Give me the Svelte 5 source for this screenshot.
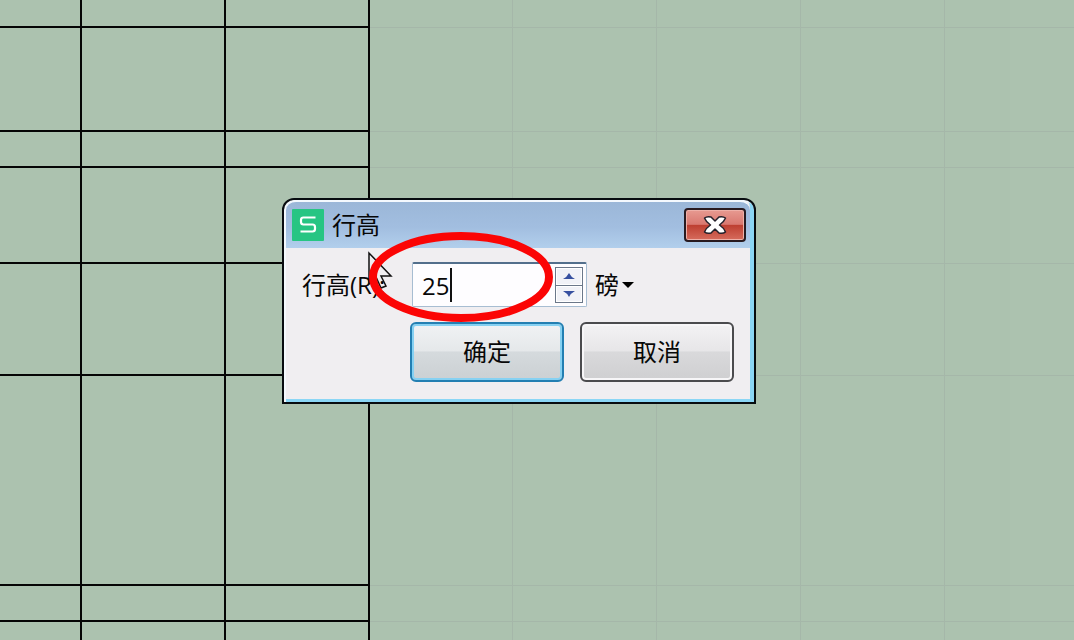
<script>
  let height = $state('25');
  const rows = [28, 104, 36, 96, 112, 210, 36, 18];
  const columns = [82, 144, 144, 143, 144, 144, 144];

  function step(amount) {
    height = String(Math.max(0, Number(height) + amount));
  }
</script>

<div class="desktop">
  <table class="sheet" aria-label="工作表">
    <colgroup>
      {#each columns as width}
        <col style="width: {width}px" />
      {/each}
      <col />
    </colgroup>
    <tbody>
      {#each rows as rowHeight}
        <tr style="height: {rowHeight}px">
          {#each columns as _, i}
            <td class:filled={i < 3}></td>
          {/each}
          <td></td>
        </tr>
      {/each}
    </tbody>
  </table>

  <div class="dialog" role="dialog" aria-labelledby="dialog-title">
    <header>
      <svg class="logo" viewBox="0 0 32 32" aria-hidden="true">
        <rect width="32" height="32" rx="1" fill="#27c583" />
        <path d="M23.500 8.500H11.500Q9 8.500 9 11V13Q9 15.500 11.500 15.500H20.500Q23 15.500 23 18V20Q23 22.500 20.500 22.500H8.500" fill="none" stroke="#fff" stroke-width="2.200" />
      </svg>
      <h1 id="dialog-title">行高</h1>
      <button class="close" type="button" aria-label="关闭">
        <svg viewBox="0 0 24 20" aria-hidden="true">
          <path d="M1.500 3Q4 1 8 2L12 6L16 2Q20 1 22.500 3Q21 7 16.500 10Q21 13 22.500 17Q20 19 16 18L12 14L8 18Q4 19 1.500 17Q3 13 7.500 10Q3 7 1.500 3Z" fill="#fff" stroke="#25202a" stroke-width="1.500" stroke-linejoin="round" />
        </svg>
      </button>
    </header>

    <form onsubmit={(event) => event.preventDefault()}>
      <label for="row-height">行高(R):</label>
      <div class="entry">
        <div class="field">
          <input id="row-height" type="text" inputmode="numeric" autocomplete="off" bind:value={height} />
          <span class="caret"></span>
          <div class="spinner">
            <button type="button" aria-label="增大" onclick={() => step(1)}>
              <svg viewBox="0 0 12 6" aria-hidden="true"><path d="M0 6Q4 4 6 0Q8 4 12 6Z" fill="#3650a0" /></svg>
            </button>
            <button type="button" aria-label="减小" onclick={() => step(-1)}>
              <svg viewBox="0 0 12 6" aria-hidden="true"><path d="M0 0Q4 2 6 6Q8 2 12 0Z" fill="#3650a0" /></svg>
            </button>
          </div>
        </div>
        <button class="unit" type="button">
          磅
          <svg viewBox="0 0 12 6" aria-hidden="true"><path d="M0 0H12L6 6Z" /></svg>
        </button>
      </div>
      <div class="actions">
        <button class="action primary" type="submit">确定</button>
        <button class="action" type="button">取消</button>
      </div>
    </form>

    <svg class="pointer" viewBox="0 0 28 42" aria-hidden="true">
      <path d="M2 2V33L9 26L14 37L19 35L14 25H24Z" fill="none" stroke="#111" stroke-width="1.500" />
    </svg>
    <svg class="ring" viewBox="0 0 186 90" aria-hidden="true">
      <ellipse cx="93" cy="45" rx="88" ry="41" fill="none" stroke="#fb0505" stroke-width="8" />
    </svg>
  </div>
</div>

<style>
  :global(body) {
    margin: 0;
    background: #acc2af;
  }

  .desktop {
    position: relative;
    min-height: 100vh;
    overflow: hidden;
    font-family: "Open Sans", "Noto Sans CJK SC", sans-serif;
    font-size: 24px;
    line-height: 32px;
    color: #080808;
  }

  .desktop * {
    box-sizing: border-box;
  }

  button,
  input {
    margin: 0;
    padding: 0;
    border: 0;
    background: none;
    font: inherit;
    color: inherit;
  }

  svg {
    display: block;
  }

  .sheet {
    width: 100%;
    table-layout: fixed;
    border-collapse: separate;
    border-spacing: 0;
  }

  td {
    padding: 0;
    border-right: 1px solid #a5b7a9;
    border-bottom: 1px solid #a5b7a9;
  }

  td:last-child {
    border-right: 0;
  }

  tr:last-child td {
    border-bottom: 0;
  }

  td.filled {
    border-color: #050505;
    border-right-width: 2px;
    border-bottom-width: 2px;
  }

  .dialog {
    position: absolute;
    top: 198px;
    left: 282px;
    width: 474px;
    border: 2px solid #080c10;
    border-radius: 12px 12px 0 0;
    background: #f0eef1;
    box-shadow: inset 2px 2px #f4f9fe, inset -4px -3px #8bd6f5;
  }

  header {
    display: flex;
    align-items: center;
    gap: 8px;
    height: 48px;
    margin: 0 4px 0 2px;
    padding: 0 4px 0 6px;
    border-top: 2px solid #f4f9fe;
    border-radius: 10px 10px 0 0;
    background: linear-gradient(#9bb7d8, #a2bee0 55%, #b2cfec);
  }

  .logo {
    width: 32px;
    height: 32px;
  }

  h1 {
    flex: 1;
    margin: 0;
    font-size: 24px;
    font-weight: 400;
  }

  .close {
    display: grid;
    place-items: center;
    width: 62px;
    height: 34px;
    border: 2px solid #281a20;
    border-radius: 4px;
    background: linear-gradient(#e79a91, #d97870 48%, #bd3e30 50%, #d66c5d);
    box-shadow: inset 0 0 0 1px #eeb0a8;
  }

  .close svg {
    width: 24px;
    height: 20px;
  }

  form {
    display: grid;
    grid-template-columns: 108px 1fr;
    row-gap: 15px;
    align-items: center;
    padding: 14px 20px 20px 18px;
  }

  label {
    white-space: nowrap;
  }

  .entry {
    display: flex;
    align-items: center;
    gap: 8px;
    padding-left: 2px;
  }

  .field {
    position: relative;
    display: flex;
    align-items: center;
    width: 175px;
    height: 45px;
    padding-right: 3px;
    border: 1px solid #a7bdd2;
    border-top: 2px solid #536f8c;
    border-radius: 2px;
    background: #fefdff;
  }

  input {
    flex: 1;
    min-width: 0;
    height: 40px;
    padding-left: 9px;
    outline: 0;
    caret-color: transparent;
  }

  .caret {
    position: absolute;
    top: 4px;
    left: 37px;
    width: 2px;
    height: 34px;
    background: #111;
  }

  .spinner {
    display: grid;
    width: 28px;
    height: 36px;
    border: 1px solid #6b7789;
    background: #f1f2f7;
  }

  .spinner button {
    display: grid;
    place-items: center;
    box-shadow: inset 0 0 0 1px #fff;
  }

  .spinner button + button {
    border-top: 1px solid #6b7789;
  }

  .spinner svg {
    width: 12px;
    height: 6px;
  }

  .unit {
    display: flex;
    align-items: center;
    gap: 3px;
  }

  .unit svg {
    width: 12px;
    height: 6px;
  }

  .actions {
    grid-column: 2;
    display: flex;
    gap: 16px;
  }

  .action {
    flex: 1;
    height: 60px;
    border: 2px solid #4b4b4e;
    border-radius: 6px;
    background: linear-gradient(#f3f2f4, #e7e6e8 48%, #d9d9db 50%, #cfcfd1);
    box-shadow: inset 0 0 0 2px #f7f6f8;
  }

  .action.primary {
    border-color: #237fb2;
    background: linear-gradient(#f0f2f4, #e5e8ea 48%, #d5dadd 50%, #cbd0d3);
    box-shadow: inset 0 0 0 2px #86d1f2;
  }

  .pointer {
    position: absolute;
    top: 51px;
    left: 83px;
    width: 28px;
    height: 42px;
    pointer-events: none;
  }

  .ring {
    position: absolute;
    top: 32px;
    left: 84px;
    width: 186px;
    height: 90px;
    pointer-events: none;
  }
</style>
